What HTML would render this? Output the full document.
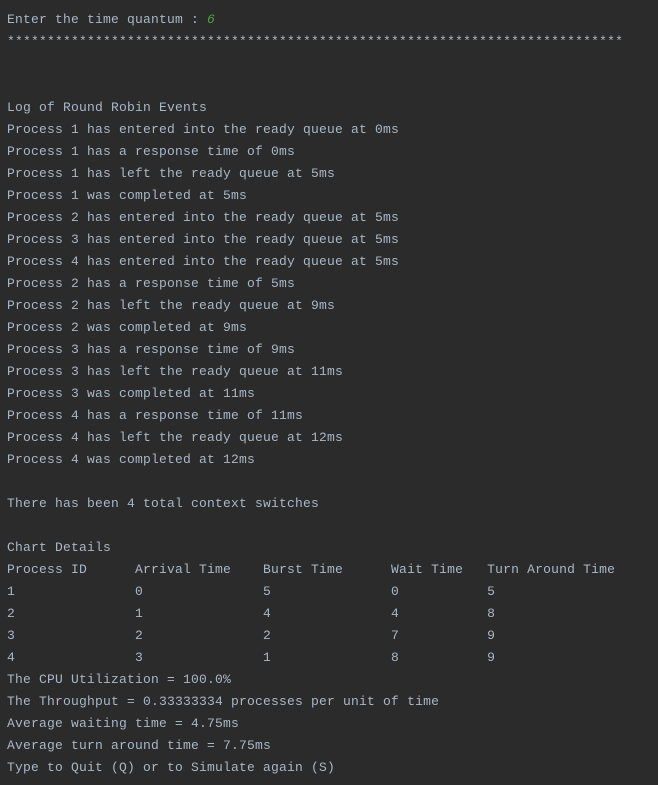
<!DOCTYPE html>
<html><head><meta charset="utf-8"><style>
html,body{margin:0;padding:0;background:#2b2b2b;width:658px;height:785px;overflow:hidden}
pre{margin:0;padding:9px 0 0 7px;font-family:"Liberation Mono",monospace;font-size:13px;letter-spacing:0.2px;line-height:22px;color:#a9b7c6}
i{color:#4fa243;font-style:italic}
</style></head><body><pre>Enter the time quantum : <i>6</i>
*****************************************************************************


Log of Round Robin Events
Process 1 has entered into the ready queue at 0ms
Process 1 has a response time of 0ms
Process 1 has left the ready queue at 5ms
Process 1 was completed at 5ms
Process 2 has entered into the ready queue at 5ms
Process 3 has entered into the ready queue at 5ms
Process 4 has entered into the ready queue at 5ms
Process 2 has a response time of 5ms
Process 2 has left the ready queue at 9ms
Process 2 was completed at 9ms
Process 3 has a response time of 9ms
Process 3 has left the ready queue at 11ms
Process 3 was completed at 11ms
Process 4 has a response time of 11ms
Process 4 has left the ready queue at 12ms
Process 4 was completed at 12ms

There has been 4 total context switches

Chart Details
Process ID      Arrival Time    Burst Time      Wait Time   Turn Around Time
1               0               5               0           5
2               1               4               4           8
3               2               2               7           9
4               3               1               8           9
The CPU Utilization = 100.0%
The Throughput = 0.33333334 processes per unit of time
Average waiting time = 4.75ms
Average turn around time = 7.75ms
Type to Quit (Q) or to Simulate again (S)</pre></body></html>
